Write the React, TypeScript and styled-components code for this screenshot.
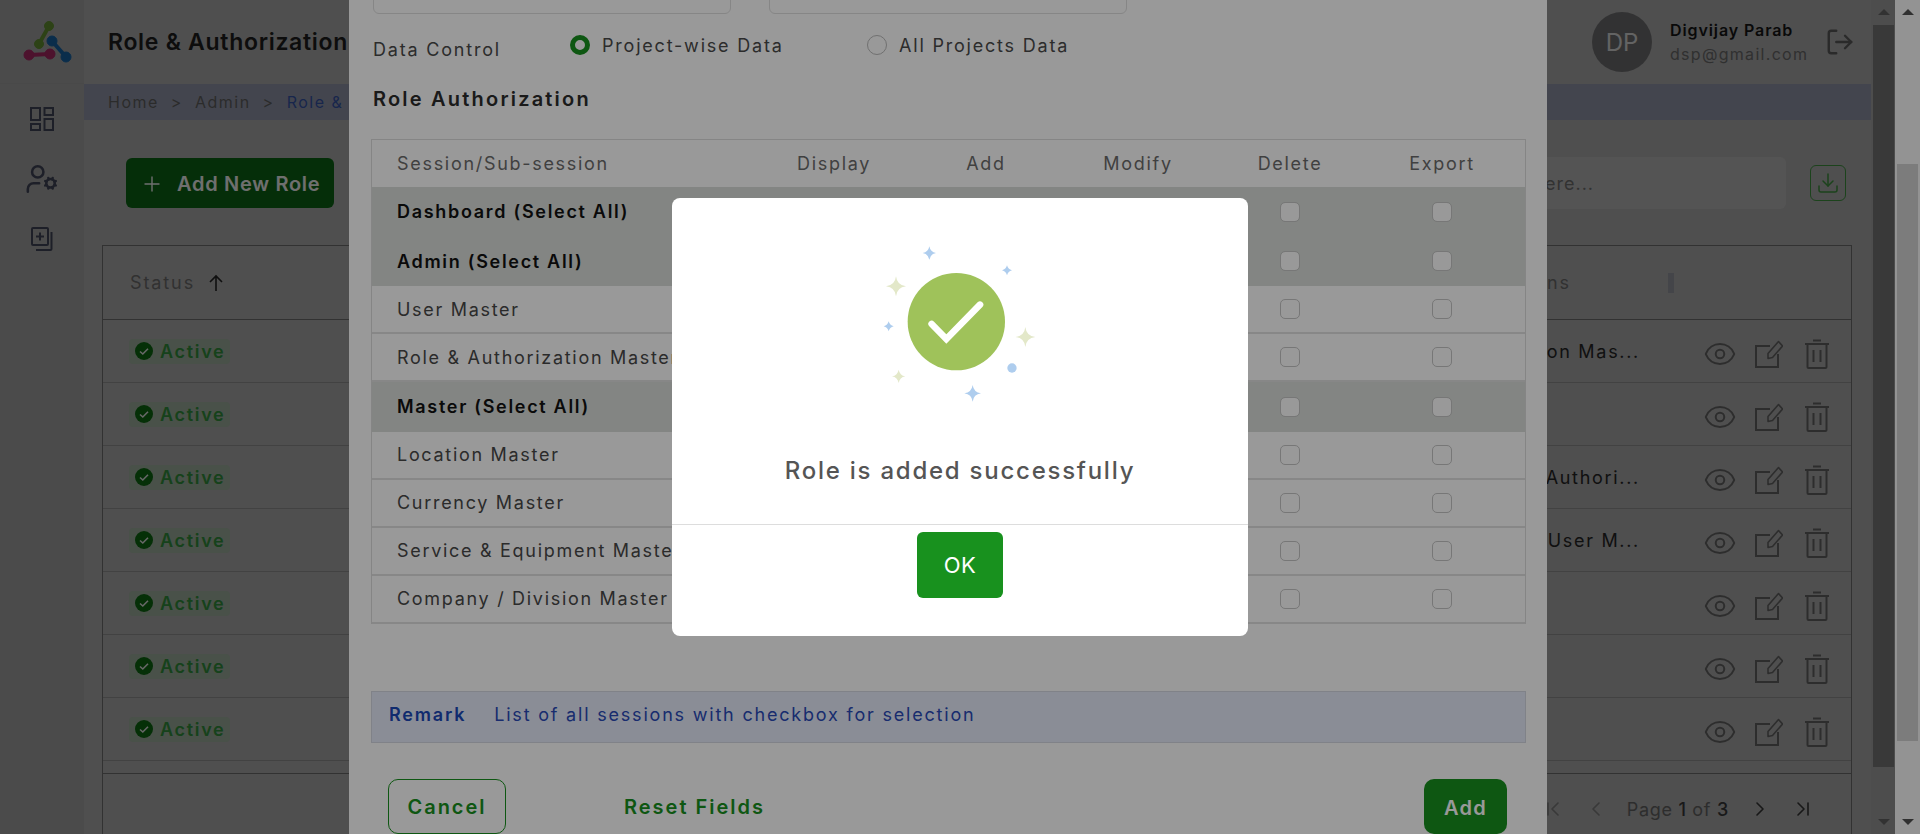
import React from 'react';
import styled, { createGlobalStyle } from 'styled-components';
import {
  ChevronFirst,
  ChevronLast,
  ChevronLeft,
  ChevronRight,
  Download,
  Eye,
  LogOut,
  Plus,
  UserCog,
} from 'lucide-react';

const GlobalStyle = createGlobalStyle`
  html, body {
    margin: 0;
    height: 100%;
    overflow: hidden;
    background: #a5a5a5;
    font-family: Inter, "Open Sans", sans-serif;
  }
  * { box-sizing: border-box; }
`;

const Screen = styled.div`
  position: relative;
  display: flex;
  width: 1920px;
  height: 834px;
  overflow: hidden;
`;

/* page behind the modal */
const Sidebar = styled.aside`
  width: 84px;
  flex: none;
  background: #9e9e9e;
`;
const LogoCell = styled.div`
  height: 84px;
  border-bottom: 1px solid #999;
`;
const SideNav = styled.nav`
  display: flex;
  flex-direction: column;
  padding-top: 5px;
`;
const SideItem = styled.div`
  height: 60px;
  display: flex;
  align-items: center;
  justify-content: center;
  color: #3e4254;
`;
const Main = styled.div`
  width: 1787px;
  flex: none;
  display: flex;
  flex-direction: column;
  background: #a5a5a5;
`;
const Header = styled.header`
  height: 84px;
  flex: none;
  display: flex;
  align-items: center;
  padding: 0 16px 0 24px;
`;
const PageTitle = styled.h1`
  margin: 0;
  white-space: nowrap;
  font-size: 23px;
  font-weight: 600;
  letter-spacing: 0.7px;
  color: #1c1c1c;
`;
const Avatar = styled.div`
  width: 60px;
  height: 60px;
  margin-left: auto;
  border-radius: 50%;
  background: #6a6a6c;
  color: #d0d0d0;
  display: flex;
  align-items: center;
  justify-content: center;
  font-size: 24px;
`;
const UserInfo = styled.div`
  width: 139px;
  margin: 0 16px 0 18px;
  white-space: nowrap;
`;
const UserName = styled.div`
  font-size: 16px;
  font-weight: 600;
  line-height: 24px;
  letter-spacing: 0.9px;
  color: #151515;
`;
const UserMail = styled.div`
  font-size: 16px;
  line-height: 24px;
  letter-spacing: 1.3px;
  color: #666;
`;
const LogoutWrap = styled.div`
  display: flex;
  color: #585858;
`;
const Crumbs = styled.div`
  height: 36px;
  flex: none;
  display: flex;
  align-items: center;
  gap: 12px;
  padding-left: 24px;
  background: #8e92a3;
  font-size: 16px;
  letter-spacing: 1.5px;
  color: #5c5c5c;
`;
const CrumbLink = styled.span`
  white-space: nowrap;
  color: #33509f;
`;
const Toolbar = styled.div`
  height: 125px;
  flex: none;
  display: flex;
  align-items: flex-start;
  padding: 38px 25px 0 42px;
`;
const AddRoleButton = styled.div`
  width: 208px;
  height: 50px;
  display: flex;
  align-items: center;
  gap: 13px;
  padding: 2px 0 0 14px;
  border-radius: 6px;
  background: #0c6215;
  color: #e8e8e8;
  font-size: 20px;
  font-weight: 600;
  letter-spacing: 0.7px;
`;
const SearchBox = styled.div`
  width: 460px;
  height: 52px;
  margin: -1px 24px 0 auto;
  display: flex;
  align-items: center;
  padding-left: 219px;
  border-radius: 6px;
  background: #b0b0b0;
  color: #6a6a6a;
  font-size: 18px;
  letter-spacing: 1px;
`;
const DownloadButton = styled.div`
  width: 36px;
  height: 36px;
  margin-top: 7px;
  display: flex;
  align-items: center;
  justify-content: center;
  border: 1px solid #3c8c3c;
  border-radius: 6px;
  color: #3c8c3c;
`;
const Card = styled.section`
  flex: 1;
  margin: 0 19px 0 18px;
  border: 1px solid #6a6a6a;
  border-bottom: none;
  display: flex;
  flex-direction: column;
`;
const CardHead = styled.div`
  height: 74px;
  flex: none;
  display: flex;
  align-items: center;
  padding-right: 177px;
  border-bottom: 1px solid #6a6a6a;
  font-size: 18px;
  letter-spacing: 1.9px;
  color: #686868;
`;
const StatusHead = styled.div`
  display: flex;
  align-items: center;
  gap: 13px;
  padding-left: 27px;
`;
const SessionsHead = styled.div`
  margin-left: auto;
`;
const ResizeGrip = styled.div`
  width: 6px;
  height: 20px;
  margin-left: 97px;
  background: #8f919a;
`;
const RoleRow = styled.div`
  height: 63px;
  flex: none;
  display: flex;
  align-items: center;
  padding: 0 22px 0 26px;
  border-bottom: 1px solid #8a8a8a;
`;
const ActiveBadge = styled.div`
  width: 101px;
  height: 25px;
  display: flex;
  align-items: center;
  gap: 7px;
  padding-left: 6px;
  border-radius: 4px;
  background: #9aa99a;
  color: #2f8a3a;
  font-size: 18px;
  font-weight: 600;
  letter-spacing: 1.7px;
`;
const RoleSessions = styled.div`
  margin: 0 63px 0 auto;
  font-size: 18px;
  letter-spacing: 1.7px;
  color: #242424;
  white-space: nowrap;
`;
const RowActions = styled.div<{ $solo?: boolean }>`
  display: flex;
  align-items: center;
  gap: 18px;
  margin: 6px 0 0 ${(p) => (p.$solo ? 'auto' : '0')};
  color: #606060;
  & > svg:last-child {
    margin-left: 4px;
  }
`;
const CardFoot = styled.div`
  margin-top: 12px;
  flex: 1;
  display: flex;
  align-items: center;
  justify-content: flex-end;
  gap: 19px;
  padding: 10px 36px 0 0;
  border-top: 1px solid #6a6a6a;
  font-size: 18px;
  letter-spacing: 0.7px;
  color: #686868;
`;
const PageIcon = styled.span<{ $muted?: boolean }>`
  display: flex;
  color: ${(p) => (p.$muted ? '#777' : '#333')};
`;
const PageLabel = styled.span`
  color: #606060;
  & b {
    font-weight: 500;
    color: #363636;
  }
`;

/* scrollbars */
const ScrollTrack = styled.div<{ $dark?: boolean }>`
  width: 25px;
  height: 100%;
  flex: none;
  position: relative;
  padding: 0 2px;
  background: ${(p) => (p.$dark ? '#a2a2a2' : '#f6f6f6')};
`;
const ScrollThumb = styled.div<{ $top: number; $height: number; $dark?: boolean }>`
  margin-top: ${(p) => p.$top}px;
  height: ${(p) => p.$height}px;
  background: ${(p) => (p.$dark ? '#797979' : '#cfcfcf')};
`;
const ScrollArrow = styled.span<{ $down?: boolean; $dark?: boolean }>`
  position: absolute;
  left: 7px;
  ${(p) => (p.$down ? 'bottom: 9px;' : 'top: 9px;')}
  border-left: 6px solid transparent;
  border-right: 6px solid transparent;
  ${(p) => (p.$down ? 'border-top' : 'border-bottom')}: 6px solid ${(p) => (p.$dark ? '#6a6a6a' : '#505050')};
`;

/* modal */
const ModalBackdrop = styled.div`
  position: absolute;
  inset: 0;
  display: flex;
  background: rgba(0, 0, 0, 0.2);
`;
const ModalArea = styled.div`
  flex: 1;
  height: 100%;
`;
const Modal = styled.div`
  width: 1198px;
  height: 100%;
  margin-left: 349px;
  padding: 0 22px;
  overflow: hidden;
  background: #fff;
`;
const FieldRow = styled.div`
  display: flex;
  gap: 38px;
  margin-top: -28px;
  padding-left: 2px;
`;
const Field = styled.div`
  width: 358px;
  height: 42px;
  border: 1px solid #e0e0e0;
  border-radius: 6px;
`;
const ControlRow = styled.div`
  display: flex;
  height: 22px;
  margin-top: 20px;
  padding-left: 2px;
  font-size: 18px;
  letter-spacing: 1.8px;
  color: #4a4a4a;
`;
const ControlLabel = styled.div`
  width: 197px;
  padding-top: 5px;
  line-height: 22px;
`;
const RadioItem = styled.label`
  width: 297px;
  display: flex;
  align-items: center;
  gap: 12px;
`;
const Radio = styled.span<{ $on?: boolean }>`
  width: 20px;
  height: 20px;
  flex: none;
  border-radius: 50%;
  border: ${(p) => (p.$on ? '5px solid #18911e' : '1px solid #bbb')};
  background: #fff;
`;
const SectionTitle = styled.h2`
  margin: 31px 0 28px 2px;
  font-size: 20px;
  line-height: 24px;
  font-weight: 600;
  letter-spacing: 2.2px;
  color: #2c2c2c;
`;
const AuthTable = styled.div`
  width: 1155px;
  border: 1px solid #dedede;
  border-bottom: none;
`;
const AuthRow = styled.div<{ $section?: boolean; $head?: boolean }>`
  display: grid;
  grid-template-columns: 385px repeat(5, 152px);
  align-items: center;
  height: ${(p) => (p.$head ? '47px' : p.$section ? '49.6px' : '48px')};
  padding-left: 1px;
  font-size: 18px;
  letter-spacing: 1.7px;
  font-weight: ${(p) => (p.$section ? 600 : 400)};
  color: ${(p) => (p.$section ? '#111' : p.$head ? '#6c6c6c' : '#484848')};
  background: ${(p) => (p.$section ? '#dadeda' : '#fff')};
  border-bottom: ${(p) => (p.$section || p.$head ? 'none' : '2px solid #e2e2e2')};
`;
const AuthName = styled.div`
  padding-left: 24px;
  white-space: nowrap;
`;
const AuthCell = styled.div`
  display: flex;
  justify-content: center;
`;
const Check = styled.span`
  width: 20px;
  height: 20px;
  border: 1px solid #c6c6c6;
  border-radius: 5px;
  background: #fff;
  background-clip: padding-box;
`;
const RemarkBar = styled.div`
  width: 1155px;
  height: 52px;
  margin-top: 67px;
  display: flex;
  align-items: center;
  gap: 28px;
  padding: 0 0 5px 17px;
  border: 1px solid #d5d9e3;
  background: #e6ecfb;
  font-size: 18px;
  letter-spacing: 1.8px;
  color: #2a4ab8;
`;
const RemarkKey = styled.span`
  font-weight: 600;
  color: #1c48b8;
`;
const FormActions = styled.div`
  display: flex;
  align-items: center;
  margin-top: 36px;
  padding: 0 18px 0 17px;
  font-size: 20px;
  font-weight: 600;
  letter-spacing: 2px;
  color: #18911e;
`;
const CancelButton = styled.div`
  width: 118px;
  height: 55px;
  display: flex;
  align-items: center;
  justify-content: center;
  padding-top: 2px;
  border: 1px solid #18911e;
  border-radius: 10px;
`;
const ResetLink = styled.div`
  margin-left: 118px;
  padding-top: 2px;
`;
const SubmitButton = styled.div`
  width: 83px;
  height: 55px;
  margin-left: auto;
  display: flex;
  align-items: center;
  justify-content: center;
  padding-top: 3px;
  border-radius: 10px;
  background: #18911e;
  color: #fff;
  letter-spacing: 1.2px;
`;

/* success dialog */
const DialogBackdrop = styled.div`
  position: absolute;
  inset: 0;
  display: flex;
  justify-content: center;
  align-items: flex-start;
  padding-top: 198px;
  background: rgba(0, 0, 0, 0.4);
`;
const Dialog = styled.div`
  width: 576px;
  height: 438px;
  padding-top: 22px;
  border-radius: 8px;
  background: #fff;
  text-align: center;
`;
const DialogArt = styled.svg`
  display: block;
  margin: 0 auto;
`;
const DialogMessage = styled.div`
  height: 40px;
  margin-top: 21px;
  font-size: 24px;
  font-weight: 500;
  line-height: 40px;
  letter-spacing: 1.75px;
  color: #555;
`;
const DialogFoot = styled.div`
  margin-top: 33px;
  padding-top: 7px;
  display: flex;
  justify-content: center;
  border-top: 1px solid #ddd;
`;
const OkButton = styled.div`
  width: 86px;
  height: 66px;
  display: flex;
  align-items: center;
  justify-content: center;
  border-radius: 6px;
  background: #18911e;
  color: #fff;
  font-size: 22px;
  letter-spacing: 0.5px;
`;

const LogoMark = () => (
  <svg width="84" height="84" viewBox="0 0 84 84">
    <g fill="#5f8a30" stroke="#5f8a30">
      <path d="M49 26 39 44" strokeWidth="4" />
      <circle cx="49" cy="26" r="4.5" />
      <circle cx="39" cy="44" r="4.5" />
    </g>
    <g fill="#17609e" stroke="#17609e">
      <path d="M52 41 66 57" strokeWidth="4" />
      <circle cx="52" cy="41" r="5" />
      <circle cx="66" cy="57" r="5" />
    </g>
    <g fill="#a02660" stroke="#a02660">
      <path d="M29 55 50 54" strokeWidth="4" />
      <circle cx="29" cy="55" r="5" />
      <circle cx="50" cy="54" r="5" />
    </g>
  </svg>
);

const DashboardIcon = () => (
  <svg width="24" height="24" viewBox="0 0 24 24" fill="none" stroke="currentColor" strokeWidth="2">
    <rect x="1" y="1" width="9" height="12" />
    <rect x="14.5" y="1" width="8.5" height="7" />
    <rect x="1" y="17" width="9" height="6" />
    <rect x="14.5" y="12" width="8.5" height="11" />
  </svg>
);

const StackedDocIcon = () => (
  <svg width="22" height="24" viewBox="0 0 22 24" fill="none" stroke="currentColor" strokeWidth="2">
    <rect x="1" y="1" width="16" height="17" rx="1" />
    <path d="M9 5.5v8M5 9.5h8M20.5 5v17a1 1 0 0 1-1 1H5" />
  </svg>
);

const EditIcon = () => (
  <svg width="28" height="28" viewBox="0 0 28 28" fill="none" stroke="currentColor" strokeWidth="2">
    <path d="M15 6H1v21h22V14" />
    <path d="M13 13.5v5l4.5-1L27.5 6l-4-4.5z" strokeWidth="1.6" strokeLinejoin="round" />
  </svg>
);

const TrashIcon = () => (
  <svg width="24" height="30" viewBox="0 0 24 30" fill="none" stroke="currentColor" strokeWidth="2">
    <path d="M0 5h24M8 1.5h8" />
    <path d="M2.5 5v23a1 1 0 0 0 1 1h17a1 1 0 0 0 1-1V5" />
    <path d="M8.5 11v12M15.5 11v12" />
  </svg>
);

const sparklePath = (x: number, y: number, r: number) =>
  `M${x} ${y - r}Q${x + 3} ${y - 3} ${x + r} ${y}Q${x + 3} ${y + 3} ${x} ${y + r}Q${x - 3} ${y + 3} ${x - r} ${y}Q${x - 3} ${y - 3} ${x} ${y - r}Z`;

const sparkles = [
  { x: 448, y: 99, r: 20, fill: '#aecdee' },
  { x: 681, y: 151, r: 15, fill: '#aecdee' },
  { x: 348, y: 199, r: 30, fill: '#e3e8c9' },
  { x: 326, y: 319, r: 15, fill: '#aecdee' },
  { x: 736, y: 351, r: 30, fill: '#e3e8c9' },
  { x: 356, y: 469, r: 20, fill: '#e3e8c9' },
  { x: 578, y: 520, r: 25, fill: '#aecdee' },
];

const SuccessArt = () => (
  <DialogArt width="360" height="210" viewBox="0 0 1080 630">
    {sparkles.map((s) => (
      <path key={`${s.x}-${s.y}`} d={sparklePath(s.x, s.y, s.r)} fill={s.fill} />
    ))}
    <circle cx="696" cy="444" r="14" fill="#aecdee" />
    <circle cx="529" cy="305" r="146" fill="#9fc25a" />
    <path d="M455 312 499 357 600 254" fill="none" stroke="#fff" strokeWidth="20" strokeLinecap="round" />
  </DialogArt>
);

const ActiveIcon = () => (
  <svg width="18" height="18" viewBox="0 0 18 18">
    <circle cx="9" cy="9" r="9" fill="#0c6411" />
    <path d="M5 9.5 7.8 12 13 6.8" fill="none" stroke="#d8d8d8" strokeWidth="1.6" />
  </svg>
);

const roleRows = ['on Mas...', '', ' Authori...', ',User M...', '', '', ''];

const authRows = [
  { name: 'Dashboard (Select All)', section: true },
  { name: 'Admin (Select All)', section: true },
  { name: 'User Master' },
  { name: 'Role & Authorization Master' },
  { name: 'Master (Select All)', section: true },
  { name: 'Location Master' },
  { name: 'Currency Master' },
  { name: 'Service & Equipment Master' },
  { name: 'Company / Division Master' },
];

const columns = ['Display', 'Add', 'Modify', 'Delete', 'Export'];

const App = () => (
  <Screen>
    <GlobalStyle />
    <Sidebar>
      <LogoCell>
        <LogoMark />
      </LogoCell>
      <SideNav>
        <SideItem>
          <DashboardIcon />
        </SideItem>
        <SideItem>
          <UserCog size={34} strokeWidth={1.8} />
        </SideItem>
        <SideItem>
          <StackedDocIcon />
        </SideItem>
      </SideNav>
    </Sidebar>
    <Main>
      <Header>
        <PageTitle>Role &amp; Authorization</PageTitle>
        <Avatar>DP</Avatar>
        <UserInfo>
          <UserName>Digvijay Parab</UserName>
          <UserMail>dsp@gmail.com</UserMail>
        </UserInfo>
        <LogoutWrap>
          <LogOut size={30} strokeWidth={1.9} />
        </LogoutWrap>
      </Header>
      <Crumbs>
        <span>Home</span>
        <span>&gt;</span>
        <span>Admin</span>
        <span>&gt;</span>
        <CrumbLink>Role &amp; A</CrumbLink>
      </Crumbs>
      <Toolbar>
        <AddRoleButton>
          <Plus size={24} strokeWidth={1.4} />
          Add New Role
        </AddRoleButton>
        <SearchBox>ere...</SearchBox>
        <DownloadButton>
          <Download size={24} strokeWidth={1.5} />
        </DownloadButton>
      </Toolbar>
      <Card>
        <CardHead>
          <StatusHead>
            Status
            <svg width="16" height="18" viewBox="0 0 16 18" fill="none" stroke="#222" strokeWidth="1.6">
              <path d="M8 17V2M2 8l6-6 6 6" />
            </svg>
          </StatusHead>
          <SessionsHead>Sessions</SessionsHead>
          <ResizeGrip />
        </CardHead>
        {roleRows.map((sessions, i) => (
          <RoleRow key={i}>
            <ActiveBadge>
              <ActiveIcon />
              Active
            </ActiveBadge>
            {sessions && <RoleSessions>{sessions}</RoleSessions>}
            <RowActions $solo={!sessions}>
              <Eye size={34} strokeWidth={1.4} />
              <EditIcon />
              <TrashIcon />
            </RowActions>
          </RoleRow>
        ))}
        <CardFoot>
          <PageIcon $muted>
            <ChevronFirst size={24} strokeWidth={1.6} />
          </PageIcon>
          <PageIcon $muted>
            <ChevronLeft size={24} strokeWidth={1.6} />
          </PageIcon>
          <PageLabel>
            Page <b>1</b> of <b>3</b>
          </PageLabel>
          <PageIcon>
            <ChevronRight size={24} strokeWidth={1.6} />
          </PageIcon>
          <PageIcon>
            <ChevronLast size={24} strokeWidth={1.6} />
          </PageIcon>
        </CardFoot>
      </Card>
    </Main>
    <ScrollTrack $dark>
      <ScrollArrow $dark />
      <ScrollThumb $dark $top={25} $height={742} />
      <ScrollArrow $dark $down />
    </ScrollTrack>
    <ModalBackdrop>
      <ModalArea>
        <Modal>
          <FieldRow>
            <Field />
            <Field />
          </FieldRow>
          <ControlRow>
            <ControlLabel>Data Control</ControlLabel>
            <RadioItem>
              <Radio $on />
              Project-wise Data
            </RadioItem>
            <RadioItem>
              <Radio />
              All Projects Data
            </RadioItem>
          </ControlRow>
          <SectionTitle>Role Authorization</SectionTitle>
          <AuthTable>
            <AuthRow $head>
              <AuthName>Session/Sub-session</AuthName>
              {columns.map((c) => (
                <AuthCell key={c}>{c}</AuthCell>
              ))}
            </AuthRow>
            {authRows.map((row) => (
              <AuthRow key={row.name} $section={row.section}>
                <AuthName>{row.name}</AuthName>
                {columns.map((c) => (
                  <AuthCell key={c}>
                    <Check />
                  </AuthCell>
                ))}
              </AuthRow>
            ))}
          </AuthTable>
          <RemarkBar>
            <RemarkKey>Remark</RemarkKey>
            List of all sessions with checkbox for selection
          </RemarkBar>
          <FormActions>
            <CancelButton>Cancel</CancelButton>
            <ResetLink>Reset Fields</ResetLink>
            <SubmitButton>Add</SubmitButton>
          </FormActions>
        </Modal>
      </ModalArea>
      <ScrollTrack>
        <ScrollArrow />
        <ScrollThumb $top={164} $height={577} />
        <ScrollArrow $down />
      </ScrollTrack>
    </ModalBackdrop>
    <DialogBackdrop>
      <Dialog>
        <SuccessArt />
        <DialogMessage>Role is added successfully</DialogMessage>
        <DialogFoot>
          <OkButton>OK</OkButton>
        </DialogFoot>
      </Dialog>
    </DialogBackdrop>
  </Screen>
);

export default App;
